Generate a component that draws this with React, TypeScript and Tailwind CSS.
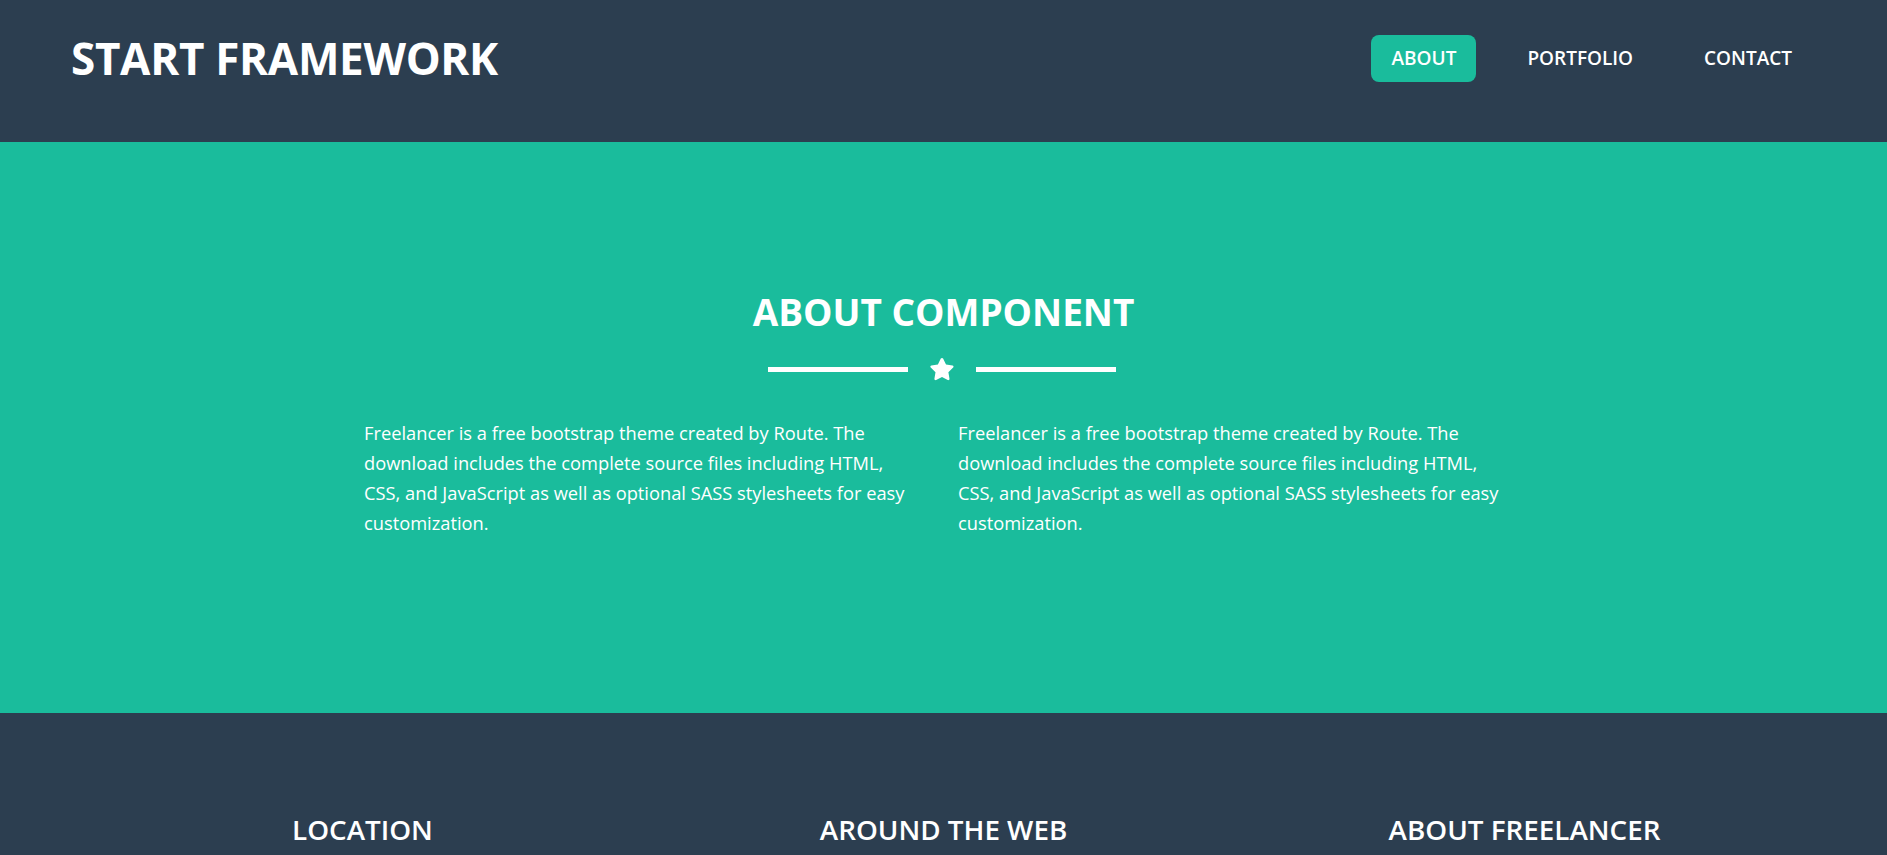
const teal = "bg-[#1abc9c]"

const paragraph =
    "Freelancer is a free bootstrap theme created by Route. The download includes the complete source files including HTML, CSS, and JavaScript as well as optional SASS stylesheets for easy customization."

const StarIcon = () => (
    <svg viewBox="0 0 24 24" className="w-[26px] h-[26px]" fill="white">
        <path d="M12 1.8c.4 0 .8.2 1 .6l2.7 5.5 6 .9c.9.1 1.3 1.2.6 1.9l-4.4 4.3 1 6c.2.9-.8 1.6-1.6 1.2L12 19.4l-5.4 2.8c-.8.4-1.8-.3-1.6-1.2l1-6-4.4-4.3c-.7-.7-.3-1.8.6-1.9l6-.9 2.7-5.5c.3-.4.7-.6 1.1-.6z" />
    </svg>
)

export default function App() {
    const links = ["ABOUT", "PORTFOLIO", "CONTACT"]

    return (
        <div className="w-full min-h-screen text-white" style={{ fontFamily: '"Open Sans", "Noto Sans", sans-serif' }}>
            <header className="bg-[#2c3e50] h-[142px] pt-[35px] pl-[71px] pr-[75px] flex justify-between items-start">
                <h1 className="text-[44px] font-bold leading-[47px] tracking-[-0.3px]">START FRAMEWORK</h1>
                <nav className="flex gap-[31px]">
                    {links.map((link, i) => (
                        <a
                            key={link}
                            href="#"
                            className={`h-[47px] px-5 flex items-center rounded-lg text-[19px] font-semibold ${i === 0 ? teal : ""}`}
                        >
                            {link}
                        </a>
                    ))}
                </nav>
            </header>

            <section className={`${teal} h-[571px] pt-[150px] flex flex-col items-center`}>
                <h2 className="text-[37px] font-bold leading-[40px]">ABOUT COMPONENT</h2>
                <div className="flex items-center gap-[21px] mt-[24px] -ml-[4px]">
                    <div className="w-[140px] h-[5px] bg-white" />
                    <StarIcon />
                    <div className="w-[140px] h-[5px] bg-white" />
                </div>
                <div className="flex gap-[42px] mt-[36px] pr-[13px]">
                    <p className="w-[552px] text-[18.3px] leading-[30px]">{paragraph}</p>
                    <p className="w-[552px] text-[18.3px] leading-[30px]">{paragraph}</p>
                </div>
            </section>

            <footer className="bg-[#2c3e50] pt-[98px] pb-[40px] flex justify-center">
                {["LOCATION", "AROUND THE WEB", "ABOUT FREELANCER"].map((title) => (
                    <div key={title} className="w-[581px] text-center">
                        <h3 className="text-[27.8px] font-semibold leading-[36px]">{title}</h3>
                    </div>
                ))}
            </footer>
        </div>
    )
}
